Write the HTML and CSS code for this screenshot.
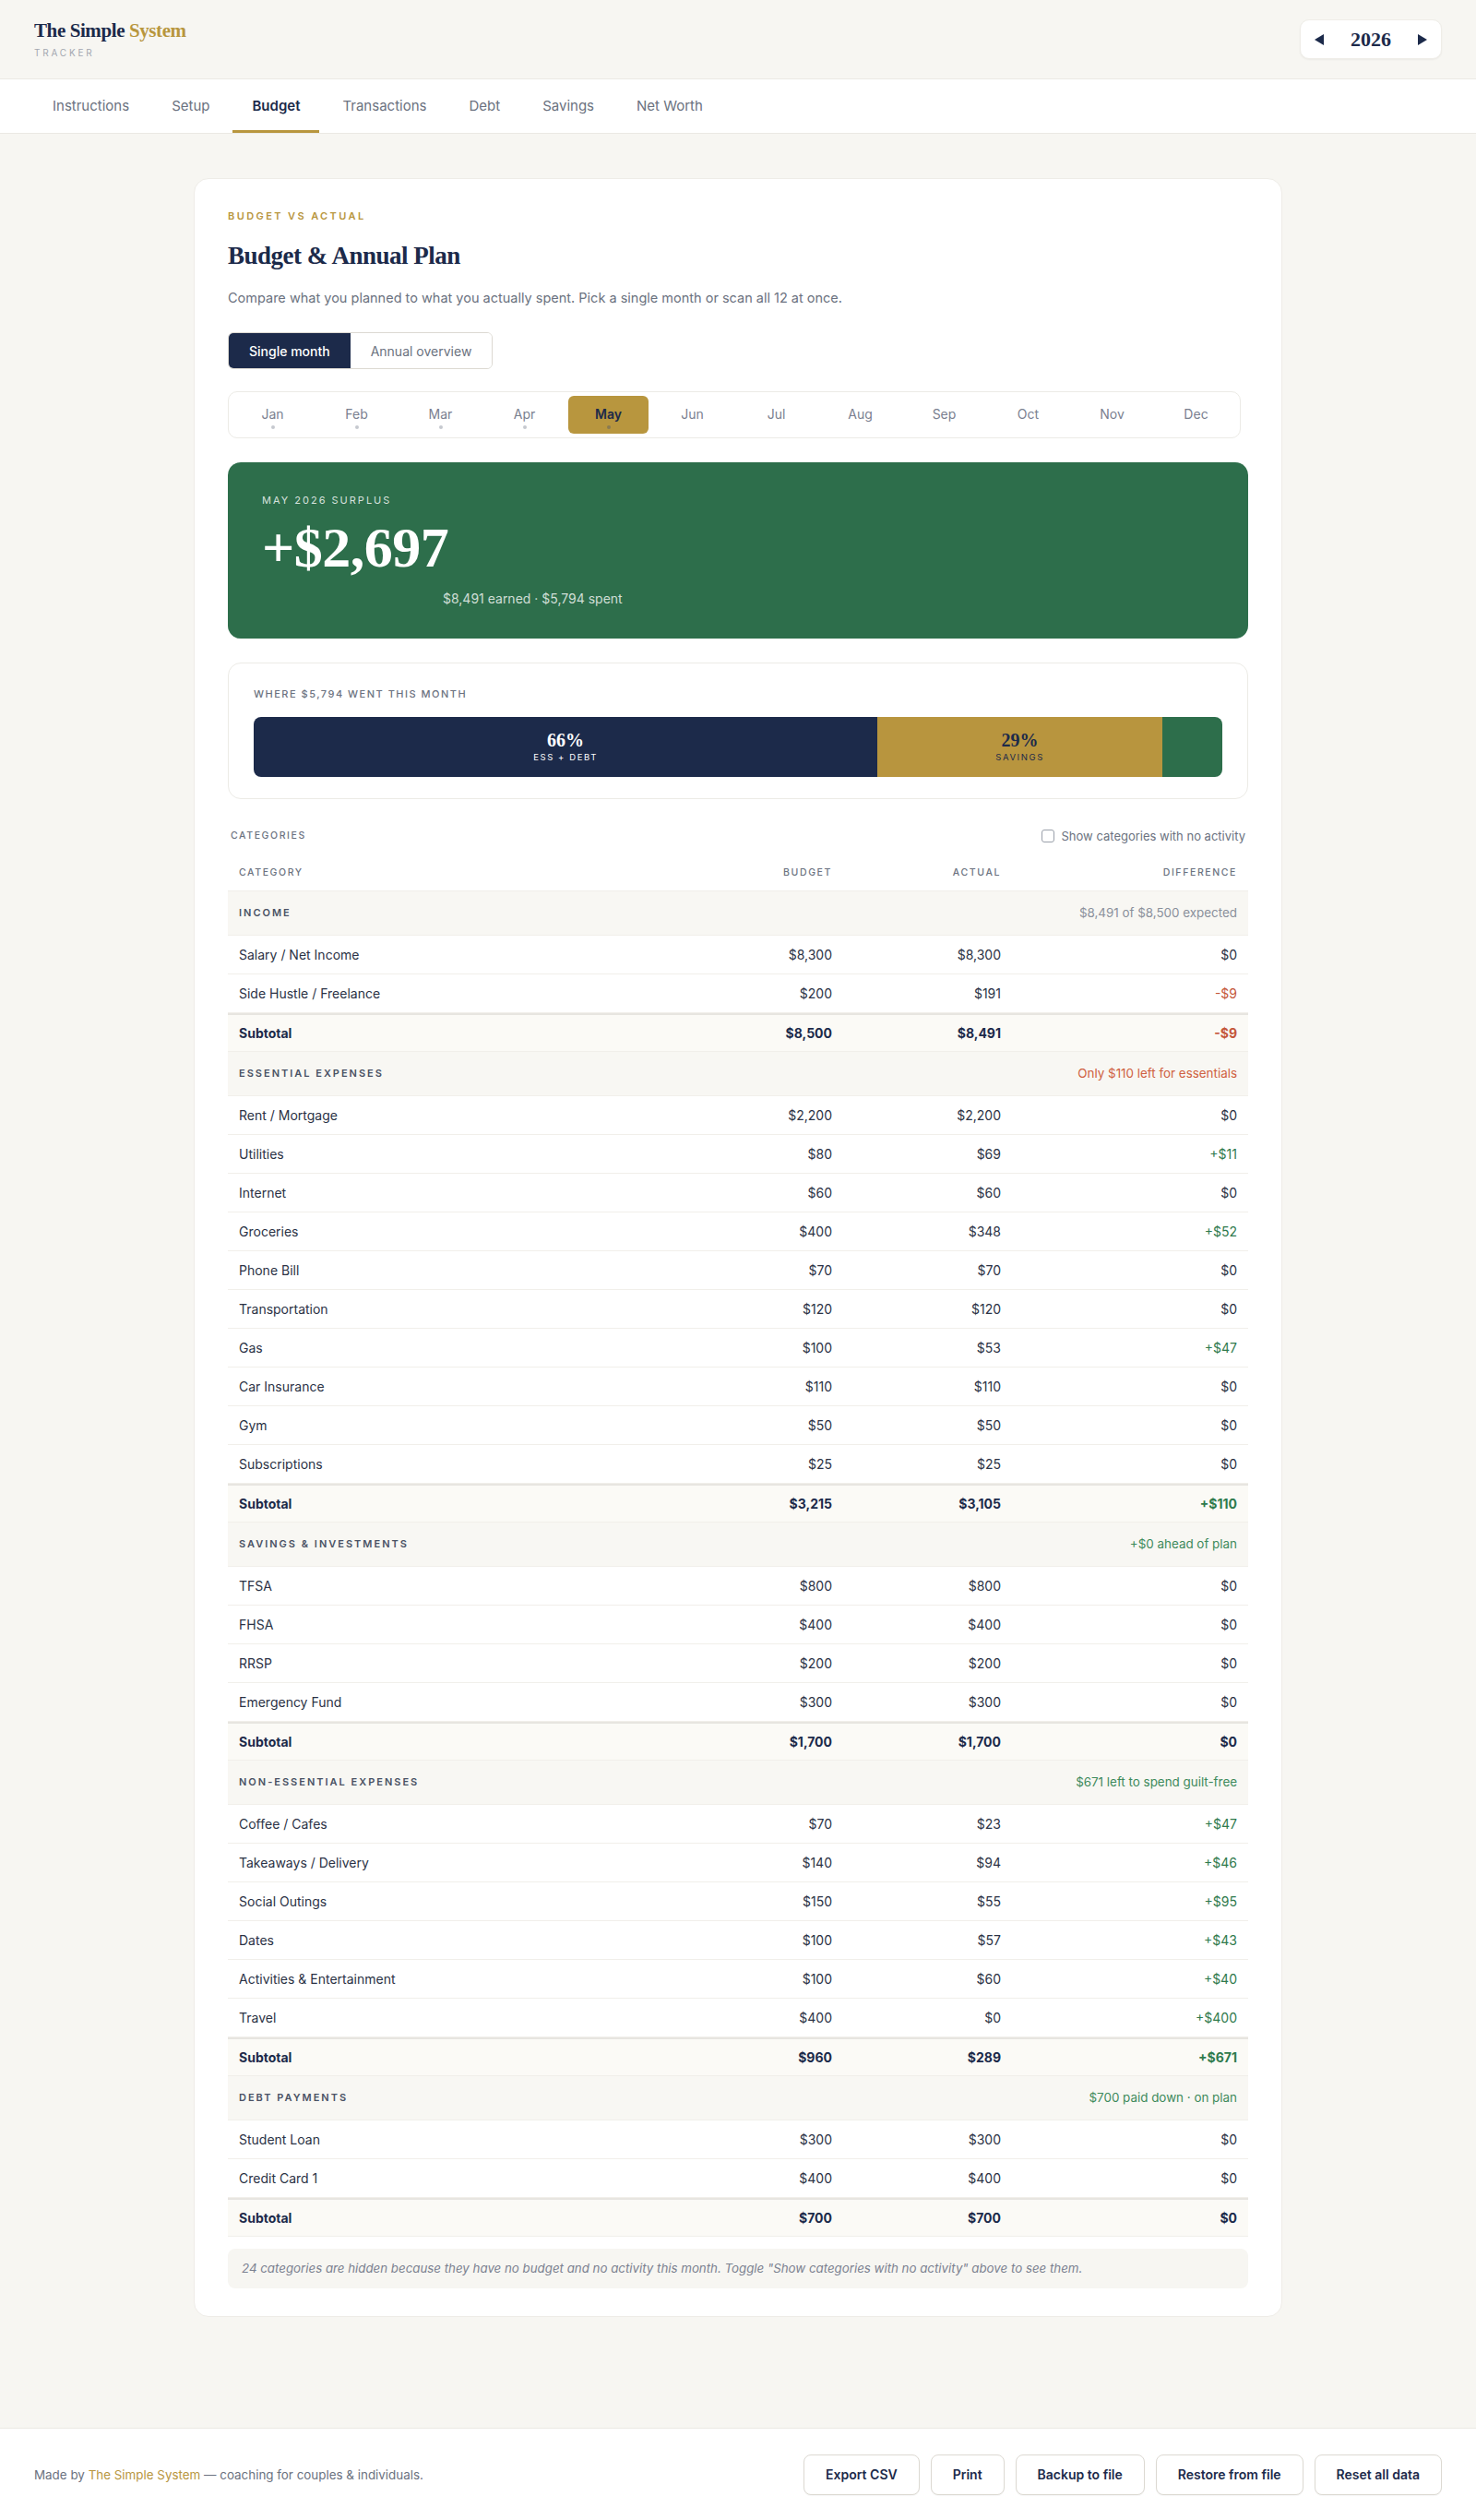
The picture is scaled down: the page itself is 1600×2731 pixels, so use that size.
FILE: index.html
```html
<!DOCTYPE html>
<html lang="en">
<head>
  <meta charset="UTF-8">
  <meta name="viewport" content="width=device-width, initial-scale=1.0">
  <title>Budget &amp; Annual Plan</title>
  <link rel="stylesheet" href="styles.css">
</head>
<body>
  <header class="topbar">
    <div class="brand">
      <div class="brand-name">The Simple <span>System</span></div>
      <div class="brand-sub">Tracker</div>
    </div>
    <div class="year-picker">
      <button class="year-arrow" aria-label="Previous year">
        <svg width="10" height="12" viewBox="0 0 10 12"><polygon points="10,0 10,12 0,6" fill="currentColor"/></svg>
      </button>
      <span class="year">2026</span>
      <button class="year-arrow" aria-label="Next year">
        <svg width="10" height="12" viewBox="0 0 10 12"><polygon points="0,0 0,12 10,6" fill="currentColor"/></svg>
      </button>
    </div>
  </header>

  <nav class="tabs">
    <a href="#">Instructions</a>
    <a href="#">Setup</a>
    <a href="#" class="active">Budget</a>
    <a href="#">Transactions</a>
    <a href="#">Debt</a>
    <a href="#">Savings</a>
    <a href="#">Net Worth</a>
  </nav>

  <main class="page">
    <section class="panel">
      <div class="eyebrow">Budget vs Actual</div>
      <h1 class="page-title">Budget &amp; Annual Plan</h1>
      <p class="lead">Compare what you planned to what you actually spent. Pick a single month or scan all 12 at once.</p>

      <div class="view-toggle">
        <button class="active">Single month</button>
        <button>Annual overview</button>
      </div>

      <div class="months">
        <button class="month has-data"><span>Jan</span><i></i></button>
        <button class="month has-data"><span>Feb</span><i></i></button>
        <button class="month has-data"><span>Mar</span><i></i></button>
        <button class="month has-data"><span>Apr</span><i></i></button>
        <button class="month has-data active"><span>May</span><i></i></button>
        <button class="month"><span>Jun</span><i></i></button>
        <button class="month"><span>Jul</span><i></i></button>
        <button class="month"><span>Aug</span><i></i></button>
        <button class="month"><span>Sep</span><i></i></button>
        <button class="month"><span>Oct</span><i></i></button>
        <button class="month"><span>Nov</span><i></i></button>
        <button class="month"><span>Dec</span><i></i></button>
      </div>

      <div class="surplus">
        <div class="surplus-label">May 2026 Surplus</div>
        <div class="surplus-amount">+$2,697</div>
        <div class="surplus-detail">$8,491 earned · $5,794 spent</div>
      </div>

      <div class="split-card">
        <div class="split-label">Where $5,794 went this month</div>
        <div class="split-bar">
          <div class="seg seg-ess" style="width: 64.4%">
            <strong>66%</strong>
            <small>Ess + Debt</small>
          </div>
          <div class="seg seg-sav" style="width: 29.4%">
            <strong>29%</strong>
            <small>Savings</small>
          </div>
          <div class="seg seg-rest" style="width: 6.2%"></div>
        </div>
      </div>

      <div class="cat-bar">
        <span class="cat-title">Categories</span>
        <label class="cat-toggle"><input type="checkbox"> Show categories with no activity</label>
      </div>

      <table class="budget-table">
        <colgroup>
          <col>
          <col class="col-num">
          <col class="col-num">
          <col class="col-diff">
        </colgroup>
        <thead>
          <tr>
            <th>Category</th>
            <th class="num">Budget</th>
            <th class="num">Actual</th>
            <th class="num">Difference</th>
          </tr>
        </thead>
        <tbody>
          <tr class="group">
            <td colspan="2">Income</td>
            <td colspan="2" class="group-note">$8,491 of $8,500 expected</td>
          </tr>
          <tr><td>Salary / Net Income</td><td class="num">$8,300</td><td class="num">$8,300</td><td class="num">$0</td></tr>
          <tr><td>Side Hustle / Freelance</td><td class="num">$200</td><td class="num">$191</td><td class="num neg">-$9</td></tr>
          <tr class="subtotal"><td>Subtotal</td><td class="num">$8,500</td><td class="num">$8,491</td><td class="num neg">-$9</td></tr>

          <tr class="group">
            <td colspan="2">Essential Expenses</td>
            <td colspan="2" class="group-note warn">Only $110 left for essentials</td>
          </tr>
          <tr><td>Rent / Mortgage</td><td class="num">$2,200</td><td class="num">$2,200</td><td class="num">$0</td></tr>
          <tr><td>Utilities</td><td class="num">$80</td><td class="num">$69</td><td class="num pos">+$11</td></tr>
          <tr><td>Internet</td><td class="num">$60</td><td class="num">$60</td><td class="num">$0</td></tr>
          <tr><td>Groceries</td><td class="num">$400</td><td class="num">$348</td><td class="num pos">+$52</td></tr>
          <tr><td>Phone Bill</td><td class="num">$70</td><td class="num">$70</td><td class="num">$0</td></tr>
          <tr><td>Transportation</td><td class="num">$120</td><td class="num">$120</td><td class="num">$0</td></tr>
          <tr><td>Gas</td><td class="num">$100</td><td class="num">$53</td><td class="num pos">+$47</td></tr>
          <tr><td>Car Insurance</td><td class="num">$110</td><td class="num">$110</td><td class="num">$0</td></tr>
          <tr><td>Gym</td><td class="num">$50</td><td class="num">$50</td><td class="num">$0</td></tr>
          <tr><td>Subscriptions</td><td class="num">$25</td><td class="num">$25</td><td class="num">$0</td></tr>
          <tr class="subtotal"><td>Subtotal</td><td class="num">$3,215</td><td class="num">$3,105</td><td class="num pos">+$110</td></tr>

          <tr class="group">
            <td colspan="2">Savings &amp; Investments</td>
            <td colspan="2" class="group-note good">+$0 ahead of plan</td>
          </tr>
          <tr><td>TFSA</td><td class="num">$800</td><td class="num">$800</td><td class="num">$0</td></tr>
          <tr><td>FHSA</td><td class="num">$400</td><td class="num">$400</td><td class="num">$0</td></tr>
          <tr><td>RRSP</td><td class="num">$200</td><td class="num">$200</td><td class="num">$0</td></tr>
          <tr><td>Emergency Fund</td><td class="num">$300</td><td class="num">$300</td><td class="num">$0</td></tr>
          <tr class="subtotal"><td>Subtotal</td><td class="num">$1,700</td><td class="num">$1,700</td><td class="num">$0</td></tr>

          <tr class="group">
            <td colspan="2">Non-Essential Expenses</td>
            <td colspan="2" class="group-note good">$671 left to spend guilt-free</td>
          </tr>
          <tr><td>Coffee / Cafes</td><td class="num">$70</td><td class="num">$23</td><td class="num pos">+$47</td></tr>
          <tr><td>Takeaways / Delivery</td><td class="num">$140</td><td class="num">$94</td><td class="num pos">+$46</td></tr>
          <tr><td>Social Outings</td><td class="num">$150</td><td class="num">$55</td><td class="num pos">+$95</td></tr>
          <tr><td>Dates</td><td class="num">$100</td><td class="num">$57</td><td class="num pos">+$43</td></tr>
          <tr><td>Activities &amp; Entertainment</td><td class="num">$100</td><td class="num">$60</td><td class="num pos">+$40</td></tr>
          <tr><td>Travel</td><td class="num">$400</td><td class="num">$0</td><td class="num pos">+$400</td></tr>
          <tr class="subtotal"><td>Subtotal</td><td class="num">$960</td><td class="num">$289</td><td class="num pos">+$671</td></tr>

          <tr class="group">
            <td colspan="2">Debt Payments</td>
            <td colspan="2" class="group-note good">$700 paid down · on plan</td>
          </tr>
          <tr><td>Student Loan</td><td class="num">$300</td><td class="num">$300</td><td class="num">$0</td></tr>
          <tr><td>Credit Card 1</td><td class="num">$400</td><td class="num">$400</td><td class="num">$0</td></tr>
          <tr class="subtotal"><td>Subtotal</td><td class="num">$700</td><td class="num">$700</td><td class="num">$0</td></tr>
        </tbody>
      </table>

      <p class="hidden-note">24 categories are hidden because they have no budget and no activity this month. Toggle "Show categories with no activity" above to see them.</p>
    </section>
  </main>

  <footer class="footer">
    <p>Made by <a href="#">The Simple System</a> — coaching for couples &amp; individuals.</p>
    <div class="footer-actions">
      <button>Export CSV</button>
      <button>Print</button>
      <button>Backup to file</button>
      <button>Restore from file</button>
      <button>Reset all data</button>
    </div>
  </footer>
</body>
</html>
```

FILE: styles.css
```css
body {
  font-family: Inter, "Noto Sans", Arial, sans-serif;
  margin: 0;
  padding: 0;
  background-color: #f7f6f2;
  color: #2b3245;
  min-height: 100vh;
  display: flex;
  flex-direction: column;
}

button {
  font-family: inherit;
}

/* top bar */
.topbar {
  height: 85px;
  padding: 0 37px;
  display: flex;
  align-items: center;
  justify-content: space-between;
  border-bottom: 1px solid #ebe9e4;
}

.brand-name {
  font-family: "Liberation Serif", "Times New Roman", serif;
  font-size: 21px;
  font-weight: bold;
  line-height: 24px;
  letter-spacing: -0.4px;
  color: #1c2a4a;
}

.brand-name span {
  color: #b8963e;
}

.brand-sub {
  margin-top: 5px;
  font-size: 10px;
  line-height: 14px;
  letter-spacing: 2.8px;
  text-transform: uppercase;
  color: #a3a7b0;
}

.year-picker {
  display: flex;
  align-items: center;
  gap: 29px;
  height: 43px;
  padding: 0 15px;
  background-color: #ffffff;
  border: 1px solid #efede8;
  border-radius: 10px;
  box-shadow: 0 1px 2px rgba(0, 0, 0, 0.05);
  box-sizing: border-box;
}

.year-arrow {
  border: none;
  background: none;
  padding: 0;
  color: #1c2a4a;
  display: flex;
  cursor: pointer;
}

.year {
  font-family: "Liberation Serif", "Times New Roman", serif;
  font-size: 22px;
  font-weight: bold;
  color: #1c2a4a;
}

/* tabs */
.tabs {
  display: flex;
  gap: 4px;
  padding: 0 36px;
  background-color: #ffffff;
  border-bottom: 1px solid #ebe9e4;
}

.tabs a {
  display: block;
  height: 58px;
  line-height: 58px;
  padding: 0 21px;
  font-size: 15px;
  color: #6b7280;
  text-decoration: none;
  box-sizing: border-box;
}

.tabs a.active {
  color: #1c2a4a;
  font-weight: 600;
  border-bottom: 3px solid #b8963e;
}

/* page */
.page {
  flex-grow: 1;
  padding: 48px 24px 100px;
}

.panel {
  max-width: 1180px;
  margin: 0 auto;
  padding: 33px 36px 30px;
  background-color: #ffffff;
  border: 1px solid #eeece7;
  border-radius: 16px;
  box-sizing: border-box;
}

.eyebrow {
  font-size: 11px;
  line-height: 14px;
  font-weight: 600;
  letter-spacing: 2.4px;
  text-transform: uppercase;
  color: #b8963e;
}

.page-title {
  margin: 20px 0 0;
  font-family: "Liberation Serif", "Times New Roman", serif;
  font-size: 27px;
  line-height: 32px;
  font-weight: bold;
  letter-spacing: -0.5px;
  color: #1c2a4a;
}

.lead {
  margin: 20px 0 0;
  font-size: 14.5px;
  line-height: 20px;
  color: #6b7280;
}

.view-toggle {
  display: inline-flex;
  margin-top: 27px;
  border: 1px solid #dcd9d2;
  border-radius: 6px;
  overflow: hidden;
}

.view-toggle button {
  height: 38px;
  padding: 0 22px;
  border: none;
  background-color: #ffffff;
  font-size: 14px;
  color: #6b7280;
  cursor: pointer;
}

.view-toggle button.active {
  background-color: #1c2a4a;
  color: #ffffff;
  font-weight: 500;
}

/* month picker */
.months {
  display: grid;
  grid-template-columns: repeat(12, 87px);
  gap: 4px;
  width: max-content;
  margin-top: 24px;
  padding: 4px;
  border: 1px solid #ecebe6;
  border-radius: 10px;
}

.month {
  height: 41px;
  padding: 12px 0 0;
  border: none;
  border-radius: 6px;
  background: none;
  display: flex;
  flex-direction: column;
  align-items: center;
  gap: 4px;
  font-size: 14px;
  color: #7a8090;
  cursor: pointer;
}

.month span {
  line-height: 16px;
}

.month i {
  width: 4px;
  height: 4px;
  border-radius: 50%;
  visibility: hidden;
}

.month.has-data i {
  visibility: visible;
  background-color: #c6c9cf;
}

.month.active {
  background-color: #b8963e;
  color: #1c2a4a;
  font-weight: 600;
}

.month.active i {
  background-color: #8a7a52;
}

/* surplus banner */
.surplus {
  margin-top: 26px;
  padding: 34px 37px 34px;
  background-color: #2d6e4b;
  border-radius: 14px;
  color: #ffffff;
}

.surplus-label {
  font-size: 11px;
  line-height: 14px;
  letter-spacing: 2px;
  text-transform: uppercase;
  color: rgba(255, 255, 255, 0.82);
}

.surplus-amount {
  margin-top: 13px;
  font-family: "Liberation Serif", "Times New Roman", serif;
  font-size: 62px;
  line-height: 62px;
  font-weight: bold;
  letter-spacing: -0.5px;
}

.surplus-detail {
  margin: 16px 0 0 196px;
  font-size: 14px;
  line-height: 18px;
  color: rgba(255, 255, 255, 0.78);
}

/* spending split */
.split-card {
  margin-top: 26px;
  padding: 26px 27px 23px;
  border: 1px solid #ecebe6;
  border-radius: 14px;
}

.split-label {
  font-size: 11px;
  line-height: 14px;
  font-weight: 500;
  letter-spacing: 1.5px;
  text-transform: uppercase;
  color: #6b7280;
}

.split-bar {
  display: flex;
  height: 65px;
  margin-top: 18px;
  border-radius: 8px;
  overflow: hidden;
}

.seg {
  display: flex;
  flex-direction: column;
  align-items: center;
  justify-content: center;
  gap: 3px;
}

.seg strong {
  font-family: "Liberation Serif", "Times New Roman", serif;
  font-size: 20px;
  line-height: 20px;
}

.seg small {
  font-size: 9.5px;
  line-height: 12px;
  letter-spacing: 1.6px;
  text-transform: uppercase;
}

.seg-ess {
  background-color: #1c2a4a;
  color: #ffffff;
}

.seg-sav {
  background-color: #b8953e;
  color: #1c2a4a;
}

.seg-rest {
  background-color: #2d6e4b;
}

/* categories table */
.cat-bar {
  display: flex;
  justify-content: space-between;
  align-items: center;
  margin-top: 32px;
  padding: 0 3px;
}

.cat-title {
  font-size: 10.5px;
  line-height: 16px;
  font-weight: 500;
  letter-spacing: 1.6px;
  text-transform: uppercase;
  color: #6b7280;
}

.cat-toggle {
  display: flex;
  align-items: center;
  gap: 8px;
  font-size: 13px;
  line-height: 16px;
  color: #6b7280;
}

.cat-toggle input {
  appearance: none;
  width: 14px;
  height: 14px;
  margin: 0;
  border: 1.5px solid #9aa0aa;
  border-radius: 3px;
  background-color: #ffffff;
}

.budget-table {
  width: 100%;
  margin-top: 12px;
  border-collapse: separate;
  border-spacing: 0;
  table-layout: fixed;
}

.col-num {
  width: 183px;
}

.col-diff {
  width: 256px;
}

.budget-table th {
  padding: 12px 12px;
  line-height: 15px;
  font-size: 10.5px;
  font-weight: 500;
  letter-spacing: 1.6px;
  text-transform: uppercase;
  text-align: left;
  color: #6b7280;
  border-bottom: 1px solid #f0eee9;
}

.budget-table td {
  padding: 11px 12px;
  line-height: 19px;
  font-size: 14px;
  color: #2b3245;
  border-bottom: 1px solid #f1efea;
}

.budget-table .num {
  text-align: right;
}

.budget-table .pos {
  color: #2f7a4d;
}

.budget-table .neg {
  color: #c4573b;
}

.budget-table tr.group td {
  padding: 14px 12px;
  background-color: #f8f7f3;
  font-size: 11px;
  font-weight: 600;
  letter-spacing: 2px;
  text-transform: uppercase;
  color: #4a5264;
}

.budget-table tr.group td.group-note {
  text-align: right;
  font-size: 13.4px;
  font-weight: normal;
  letter-spacing: 0;
  text-transform: none;
  color: #8a909b;
}

.budget-table tr.group td.warn {
  color: #cf603f;
}

.budget-table tr.group td.good {
  color: #3e8a5c;
}

.budget-table tr.subtotal td {
  padding: 10px 12px;
  background-color: #fbfaf6;
  border-top: 2px solid #e7e5e0;
  font-weight: 700;
  color: #1c2a4a;
}

.budget-table tr.subtotal td.pos {
  color: #2f7a4d;
}

.budget-table tr.subtotal td.neg {
  color: #c4573b;
}

.hidden-note {
  margin: 13px 0 0;
  padding: 12px 15px;
  line-height: 19px;
  font-size: 13.3px;
  font-style: italic;
  color: #7b8190;
  background-color: #f7f6f2;
  border-radius: 8px;
}

/* footer */
.footer {
  height: 100px;
  padding: 0 37px;
  display: flex;
  align-items: center;
  justify-content: space-between;
  background-color: #ffffff;
  border-top: 1px solid #ebe9e4;
  box-sizing: border-box;
}

.footer p {
  margin: 0;
  font-size: 13.4px;
  color: #6b7280;
}

.footer p a {
  color: #b8963e;
  text-decoration: none;
}

.footer-actions {
  display: flex;
  gap: 12px;
}

.footer-actions button {
  height: 44px;
  padding: 0 23px;
  background-color: #ffffff;
  border: 1px solid #dcd9d2;
  border-radius: 8px;
  box-shadow: 0 1px 1px rgba(0, 0, 0, 0.04);
  font-size: 14px;
  font-weight: 600;
  color: #1c2a4a;
  cursor: pointer;
}
```
